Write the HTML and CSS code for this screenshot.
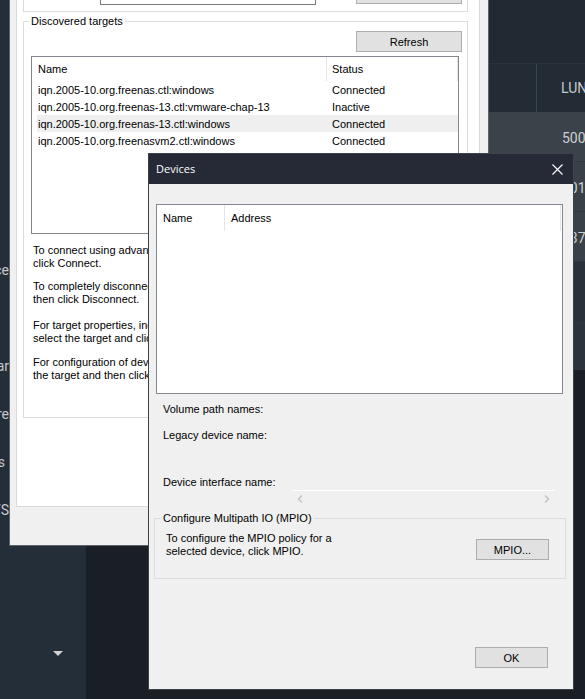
FILE: index.html
```html
<!DOCTYPE html>
<html lang="en">
<head>
<meta charset="utf-8">
<title>iSCSI Initiator Properties – Devices</title>
<link rel="stylesheet" href="styles.css">
</head>
<body>
<div class="desktop">
  <aside class="sidebar">
    <ul class="nav">
      <li class="nav-item">Directory Service</li>
      <li class="nav-item nav-short">Tasks</li>
      <li class="nav-item">Calendar</li>
      <li class="nav-item">Hardware</li>
      <li class="nav-item nav-tail">Plugins</li>
      <li class="nav-item">NFS</li>
    </ul>
    <div class="caret"></div>
  </aside>

  <main class="main">
    <div class="topbar"></div>
    <div class="grid">
      <div class="grid-row grid-head"><div class="cell cell-first"></div><div class="cell cell-lun">LUN</div></div>
      <div class="grid-row row-hover"><div class="cell cell-first"></div><div class="cell cell-lun">500</div></div>
      <div class="grid-row"><div class="cell cell-first"></div><div class="cell cell-lun">501</div></div>
      <div class="grid-row"><div class="cell cell-first"></div><div class="cell cell-lun">537</div></div>
      <div class="grid-row row-dark row-tall"></div>
      <div class="grid-row row-dark2 row-short"></div>
    </div>
  </main>

  <section class="win win-back">
    <div class="tabpage">
      <div class="prevgroup">
        <div class="input"></div>
        <div class="btn btn-quick">Quick Connect...</div>
      </div>
      <div class="group group-targets">
        <div class="group-label">Discovered targets</div>
        <div class="btn btn-refresh">Refresh</div>
        <div class="listview">
          <div class="lv-head">
            <div class="lh-name">Name</div>
            <div class="lh-status">Status</div>
          </div>
          <div class="lv-rows">
            <div class="lv-row"><div class="c-name">iqn.2005-10.org.freenas.ctl:windows</div><div class="c-status">Connected</div></div>
            <div class="lv-row"><div class="c-name">iqn.2005-10.org.freenas-13.ctl:vmware-chap-13</div><div class="c-status">Inactive</div></div>
            <div class="lv-row lv-selected"><div class="c-name">iqn.2005-10.org.freenas-13.ctl:windows</div><div class="c-status">Connected</div></div>
            <div class="lv-row"><div class="c-name">iqn.2005-10.org.freenasvm2.ctl:windows</div><div class="c-status">Connected</div></div>
          </div>
        </div>
        <div class="actions">
          <div class="action a1"><p>To connect using advanced options, select a target and then<br>click Connect.</p><div class="btn btn-act">Connect</div></div>
          <div class="action a2"><p>To completely disconnect a target, select the target and<br>then click Disconnect.</p><div class="btn btn-act">Disconnect</div></div>
          <div class="action a3"><p>For target properties, including configuration of sessions,<br>select the target and click Properties.</p><div class="btn btn-act">Properties...</div></div>
          <div class="action a4"><p>For configuration of devices associated with a target, select<br>the target and then click Devices.</p><div class="btn btn-act">Devices...</div></div>
        </div>
      </div>
    </div>
    <div class="back-footer">
      <div class="btn btn-foot">OK</div>
      <div class="btn btn-foot">Cancel</div>
      <div class="btn btn-foot">Apply</div>
    </div>
  </section>

  <section class="win win-devices">
    <header class="titlebar">
      <span class="title">Devices</span>
      <svg class="close" width="11" height="11" viewBox="0 0 11 11" aria-hidden="true">
        <path d="M0.5 0.5 L10.5 10.5 M10.5 0.5 L0.5 10.5" stroke="#ffffff" stroke-width="1.1" fill="none"/>
      </svg>
    </header>
    <div class="dlg-body">
      <div class="dev-list">
        <div class="dl-head">
          <div class="dh-name">Name</div>
          <div class="dh-addr">Address</div>
        </div>
      </div>
      <div class="fields">
        <div class="field-row r1">Volume path names:</div>
        <div class="field-row r2">Legacy device name:</div>
        <div class="field-row r3">
          <div class="f-label">Device interface name:</div>
          <div class="f-value">
            <svg width="6" height="8" viewBox="0 0 6 8" aria-hidden="true"><path d="M5 0.5 L1.5 4 L5 7.5" stroke="#c4c4c4" stroke-width="1.6" fill="none"/></svg>
            <svg width="6" height="8" viewBox="0 0 6 8" aria-hidden="true"><path d="M1 0.5 L4.5 4 L1 7.5" stroke="#c4c4c4" stroke-width="1.6" fill="none"/></svg>
          </div>
        </div>
      </div>
      <div class="group group-mpio">
        <div class="group-label">Configure Multipath IO (MPIO)</div>
        <div class="mpio-row">
          <p>To configure the MPIO policy for a<br>selected device, click MPIO.</p>
          <div class="btn btn-mpio">MPIO...</div>
        </div>
      </div>
      <div class="btn btn-ok">OK</div>
    </div>
  </section>
</div>
</body>
</html>
```
FILE: styles.css
```css
* { box-sizing: border-box; }
html, body { margin: 0; padding: 0; }
body {
  width: 585px;
  height: 699px;
  overflow: hidden;
  background: #1a1f26;
  font-family: "Liberation Sans", Arial, sans-serif;
  font-size: 11px;
  line-height: 13px;
  color: #000;
}
p { margin: 0; }

.desktop {
  position: relative;
  display: flex;
  width: 585px;
  height: 699px;
  overflow: hidden;
}

/* ---------- background app ---------- */
.sidebar {
  width: 86px;
  flex: none;
  background: #242e38;
  display: flex;
  flex-direction: column;
  padding-top: 246px;
  font-family: Roboto, "Liberation Sans", sans-serif;
  font-size: 14px;
  color: #c3c8cd;
}
.nav { list-style: none; margin: 0; padding: 0; width: 9px; }
.nav-item {
  height: 48px;
  display: flex;
  align-items: center;
  justify-content: flex-end;
  white-space: nowrap;
}
.nav-short { padding-right: 16px; }
.nav-tail { padding-right: 4px; }
.caret {
  margin: auto 0 43px 53px;
  width: 0;
  height: 0;
  border-left: 5px solid transparent;
  border-right: 5px solid transparent;
  border-top: 5px solid #d2d2d2;
}

.main {
  flex: 1;
  min-width: 0;
  display: flex;
  flex-direction: column;
  overflow: hidden;
}
.topbar { height: 63px; flex: none; background: #212a33; }
.grid { display: flex; flex-direction: column; width: 700px; }
.grid-row {
  display: flex;
  height: 50px;
  flex: none;
  align-items: center;
  padding-top: 4px;
  background: #394047;
  border-bottom: 1px solid #30373e;
  font-family: Roboto, "Liberation Sans", sans-serif;
  font-size: 14px;
  color: #ccd0d4;
}
.grid-head { height: 49px; padding-top: 0; background: #232c35; border-top: 1px solid #2a333c; border-bottom: none; color: #c4c9ce; }
.row-hover { background: #3b4249; }
.row-dark { background: #29313a; }
.row-dark2 { background: #2b333c; }
.row-tall { height: 61px; }
.row-short { height: 47px; }
.cell-first { width: 451px; align-self: stretch; }
.grid-head .cell-first { border-right: 1px solid #3a444e; }
.cell-lun { padding-left: 25px; }
.grid-head .cell-lun { padding-left: 24px; }

/* ---------- windows ---------- */
.win { position: absolute; }
.btn {
  display: flex;
  align-items: center;
  justify-content: center;
  padding-top: 1px;
  background: #e1e1e1;
  border: 1px solid #adadad;
  white-space: nowrap;
}

.win-back {
  left: 9px;
  top: -30px;
  width: 480px;
  height: 576px;
  background: #f0f0f0;
  border: 1px solid #5f646b;
  padding: 0 8px 0 6px;
  display: flex;
  flex-direction: column;
}
.tabpage {
  height: 536px;
  flex: none;
  background: #fff;
  border: 1px solid #d9d9d9;
  padding: 0 11px 0 6px;
}
.prevgroup {
  height: 40px;
  border: 1px solid #dcdcdc;
  display: flex;
  align-items: flex-end;
  padding: 0 0 6px 76px;
}
.input { width: 216px; height: 23px; background: #fff; border: 1px solid #7a7a7a; }
.btn-quick { width: 106px; height: 23px; margin: 0 0 1px 40px; }

.group {
  border: 1px solid #dcdcdc;
  display: flex;
  flex-direction: column;
}
.group-label {
  align-self: flex-start;
  margin: -7px 0 0 5px;
  padding: 0 2px;
  background: #fff;
  line-height: 13px;
}
.group-targets { margin-top: 9px; padding-bottom: 35px; }
.btn-refresh { align-self: flex-end; width: 106px; height: 21px; margin: 3px 5px 0 0; }

.listview {
  width: 428px;
  height: 178px;
  margin: 4px 0 0 7px;
  background: #fff;
  border: 1px solid #828790;
}
.lv-head { display: flex; height: 24px; align-items: stretch; }
.lh-name { width: 294px; padding-left: 6px; display: flex; align-items: center; }
.lh-status {
  width: 132px;
  padding-left: 5px;
  display: flex;
  align-items: center;
  border-left: 1px solid #e5e5e5;
  border-right: 1px solid #e5e5e5;
}
.lv-rows { margin-left: 5px; }
.lv-row { display: flex; height: 17px; align-items: flex-start; padding-top: 3px; }
.lv-selected { background: #efefef; }
.c-name { width: 289px; padding-left: 1px; white-space: nowrap; }
.c-status { padding-left: 6px; }

.actions { margin-left: 9px; margin-top: 10px; display: flex; flex-direction: column; }
.action { display: flex; justify-content: space-between; align-items: flex-start; }
.a2 { margin-top: 10px; }
.a3 { margin-top: 13px; }
.a4 { margin-top: 11px; }
.btn-act { width: 75px; height: 23px; margin-right: 8px; }

.back-footer {
  display: flex;
  justify-content: flex-end;
  gap: 6px;
  padding-top: 9px;
}
.btn-foot { width: 75px; height: 23px; }

/* ---------- devices dialog ---------- */
.win-devices {
  left: 148px;
  top: 153px;
  width: 426px;
  height: 537px;
  background: #f0f0f0;
  border: 1px solid #3d414a;
  display: flex;
  flex-direction: column;
}
.titlebar {
  height: 30px;
  flex: none;
  background: #262a36;
  display: flex;
  align-items: center;
  justify-content: space-between;
  padding: 0 10px 0 7px;
}
.title {
  font-family: "Open Sans", "Noto Sans", sans-serif;
  font-size: 11px;
  color: #fff;
  line-height: 14px;
}
.close { display: block; }

.dlg-body {
  flex: 1;
  display: flex;
  flex-direction: column;
  padding: 20px 7px 21px 5px;
}
.dev-list {
  width: 407px;
  height: 190px;
  margin-left: 2px;
  background: #fff;
  border: 1px solid #828790;
  flex: none;
}
.dl-head { display: flex; height: 26px; padding-right: 1px; }
.dh-name { width: 67px; padding-left: 6px; display: flex; align-items: center; }
.dh-addr {
  flex: 1;
  padding-left: 6px;
  display: flex;
  align-items: center;
  border-left: 1px solid #e5e5e5;
  border-right: 1px solid #e5e5e5;
}

.fields { margin: 9px 0 0 9px; display: flex; flex-direction: column; }
.field-row { line-height: 13px; }
.r1 { height: 26px; }
.r2 { height: 47px; }
.r3 { display: flex; align-items: flex-start; }
.f-label { width: 129px; }
.f-value {
  width: 263px;
  margin-top: 14px;
  border-top: 1px solid #ffffff;
  padding: 4px 5px 0 5px;
  display: flex;
  justify-content: space-between;
}
.f-value svg { display: block; }

.group-mpio { margin-top: 15px; width: 412px; flex: none; padding-bottom: 18px; }
.group-mpio .group-label { background: #f0f0f0; margin-left: 6px; }
.mpio-row {
  display: flex;
  justify-content: space-between;
  align-items: flex-start;
  margin-top: 7px;
  padding-left: 11px;
}
.btn-mpio { width: 73px; height: 21px; margin: 7px 16px 0 0; }
.btn-ok { width: 73px; height: 21px; margin: auto 18px 0 auto; }
```
